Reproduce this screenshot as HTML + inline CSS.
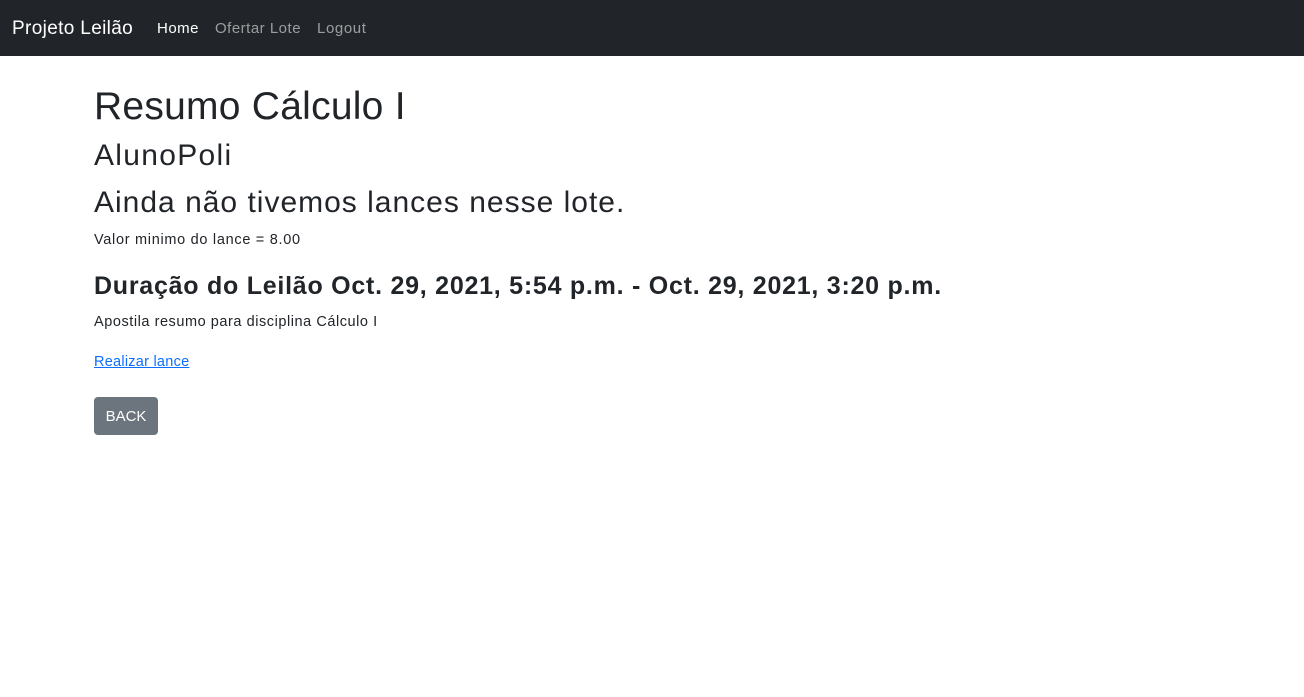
<!DOCTYPE html>
<html><head><meta charset="utf-8"><style>
*{box-sizing:border-box}
body{margin:0;font-family:"Liberation Sans",sans-serif;color:#212529;background:#fff}
.nav{height:56px;background:#212529;position:relative}
.nav span{position:absolute;top:20px;white-space:nowrap}
.brand{color:#fff;font-size:19px;letter-spacing:0.35px;top:18px!important}
.nl{font-size:15px;color:rgba(255,255,255,.55);letter-spacing:0.5px}
.act{color:#fff}
.t{position:absolute;white-space:nowrap;margin:0}
h1{font-size:39px;font-weight:500;letter-spacing:0.25px}
.h2{font-size:30px;font-weight:500}
.p{font-size:14.5px}
.btn{position:absolute;top:397px;left:94px;width:64px;height:38px;background:#6c757d;color:#fff;border-radius:4px;font-size:15px;display:flex;align-items:center;justify-content:center}
</style></head><body>
<div class="nav"><span class="brand" style="left:12px">Projeto Leilão</span><span class="nl act" style="left:157px">Home</span><span class="nl" style="left:215px">Ofertar Lote</span><span class="nl" style="left:317px;letter-spacing:0.6px">Logout</span></div>
<h1 class="t" style="left:94px;top:85px">Resumo Cálculo I</h1>
<div class="t h2" style="left:94px;top:139px;letter-spacing:1.3px">AlunoPoli</div>
<div class="t h2" style="left:94px;top:186px;letter-spacing:1px">Ainda não tivemos lances nesse lote.</div>
<div class="t p" style="left:94px;top:232px;letter-spacing:0.7px">Valor minimo do lance = 8.00</div>
<div class="t" style="left:94px;top:272px;font-size:25px;font-weight:600;letter-spacing:0.75px">Duração do Leilão Oct. 29, 2021, 5:54 p.m. - Oct. 29, 2021, 3:20 p.m.</div>
<div class="t p" style="left:94px;top:314px;letter-spacing:0.55px">Apostila resumo para disciplina Cálculo I</div>
<div class="t p" style="left:94px;top:354px;color:#0d6efd;text-decoration:underline;letter-spacing:0.25px">Realizar lance</div>
<div class="btn">BACK</div>
</body></html>
